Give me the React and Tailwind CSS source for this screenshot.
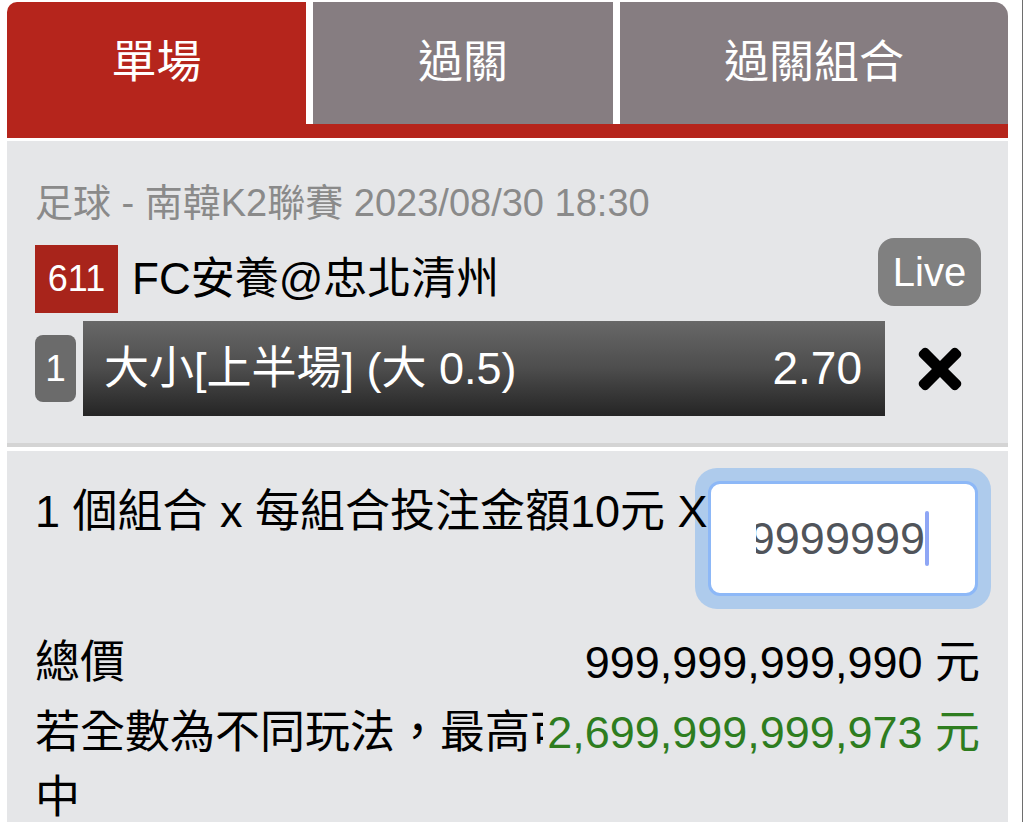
import React from 'react';
import { FaTimes } from 'react-icons/fa';

const tabs = [
  { label: '單場', active: true, width: 'w-[299px]' },
  { label: '過關', active: false, width: 'w-[300px]' },
  { label: '過關組合', active: false, width: 'flex-1' },
];

const App = () => {
  return (
    <div className="min-h-screen bg-white flex font-['Liberation_Sans','Noto_Sans_CJK_TC',sans-serif]">
      <div className="ml-[7px] w-[1001px] pt-[2px] flex flex-col">
        {/* Tabs */}
        <div className="flex h-[122px] gap-[7px]">
          {tabs.map((tab, i) => (
            <div
              key={i}
              className={`${tab.width} flex items-center justify-center text-white text-[45px] ${
                tab.active ? 'bg-[#b5251c] rounded-tl-[10px]' : 'bg-[#867d81]'
              } ${i === 2 ? 'rounded-tr-[14px]' : ''}`}
            >
              {tab.label}
            </div>
          ))}
        </div>
        <div className="h-[14px] bg-[#b5251c]" />
        <div className="h-[3px]" />

        {/* Bet slip */}
        <div className="bg-[#e5e6e8] pt-[38px] pb-[27px] pl-[28px] pr-[27px] border-b-4 border-[#d4d4d4]">
          <div className="text-[38px] leading-[48px] text-[#8a8a8a] whitespace-nowrap">
            足球 - 南韓K2聯賽 2023/08/30 18:30
          </div>

          <div className="mt-[11px] flex items-start h-[75px]">
            <div className="mt-[7px] w-[83px] h-[68px] bg-[#a8241b] text-white text-[36px] flex items-center justify-center">
              611
            </div>
            <div className="ml-[14px] mt-[7px] h-[68px] flex items-center text-[44px] text-black whitespace-nowrap">
              FC安養@忠北清州
            </div>
            <div className="ml-auto w-[103px] h-[68px] rounded-[16px] bg-[#808080] text-white text-[40px] flex items-center justify-center">
              Live
            </div>
          </div>

          <div className="mt-[8px] flex items-center h-[95px]">
            <div className="w-[41px] h-[67px] rounded-[8px] bg-[#6b6b6b] text-white text-[37px] flex items-center justify-center">
              1
            </div>
            <div className="ml-[7px] flex-1 h-[95px] bg-linear-to-b from-[#686868] via-[#4d4d4d] to-[#252525] flex items-center justify-between pl-[21px] pr-[23px] text-white">
              <span className="text-[45px] whitespace-nowrap">大小[上半場] (大 0.5)</span>
              <span className="text-[46px]">2.70</span>
            </div>
            <div className="ml-[23px] mr-[10px] w-[63px] flex items-center justify-center text-black">
              <FaTimes size={62} />
            </div>
          </div>
        </div>

        <div className="h-[4px]" />

        {/* Amount */}
        <div className="flex-1 bg-[#e5e6e8] pt-[17px] pl-[28px] pr-[28px] pb-[20px] text-black text-[45px]">
          <div className="flex items-start justify-between">
            <div className="relative z-10 mt-[18px] leading-[52px] whitespace-nowrap min-w-0">
              1 個組合 x 每組合投注金額10元 X
            </div>
            <div className="shrink-0 -mr-[11px] p-[13px] rounded-[22px] bg-[#aecbec]">
              <div className="w-[270px] h-[115px] rounded-[12px] border-[3px] border-[#8db8f7] bg-white flex items-center pl-[45px] pr-[46px]">
                <div className="flex-1 overflow-hidden flex justify-end items-center">
                  <span className="whitespace-nowrap text-[45px] text-[#50545a] leading-[52px]">9999999999</span>
                  <span className="shrink-0 w-[4px] h-[55px] bg-[#8ea6f5] rounded-[2px]" />
                </div>
              </div>
            </div>
          </div>

          <div className="mt-[21px] flex justify-between leading-[65px]">
            <span>總價</span>
            <span className="whitespace-nowrap">999,999,999,990 元</span>
          </div>

          <div className="mt-[5px] relative leading-[65px]">
            <div className="w-[560px]">若全數為不同玩法，最高可中</div>
            <span className="absolute right-0 top-0 pl-[4px] bg-[#e5e6e8] text-[#2e7d1f] whitespace-nowrap">
              2,699,999,999,973 元
            </span>
          </div>
        </div>
      </div>
      <div className="ml-auto w-[1px] bg-[#6e6e6e]" />
    </div>
  );
};

export default App;
